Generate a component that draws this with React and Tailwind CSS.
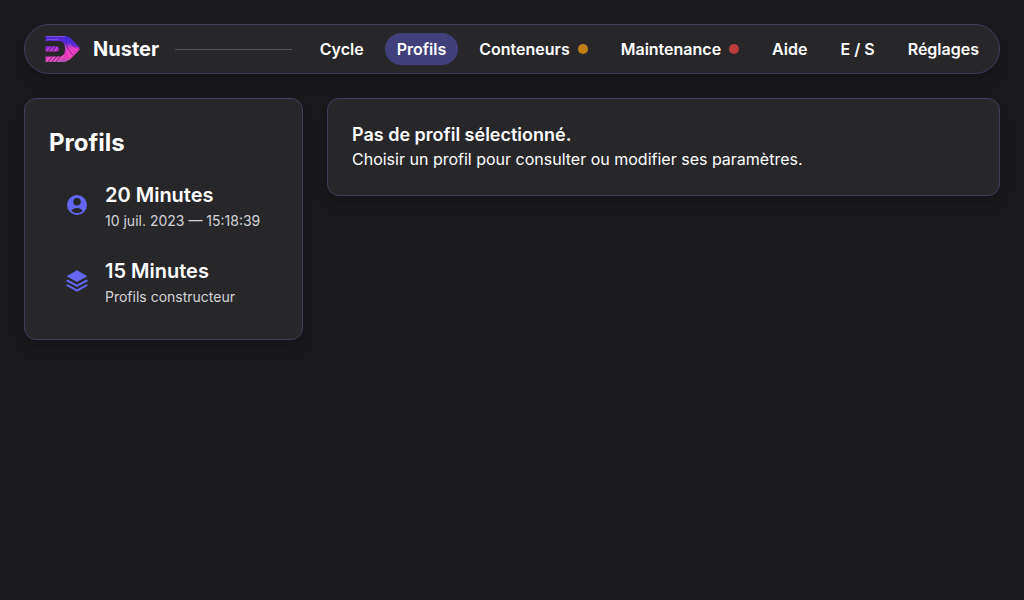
import React from "react";

const navItems = [
  { label: "Cycle" },
  { label: "Profils", active: true },
  { label: "Conteneurs", dot: "bg-[#bf8013]" },
  { label: "Maintenance", dot: "bg-[#bb3d3f]" },
  { label: "Aide" },
  { label: "E / S" },
  { label: "Réglages" },
];

function Logo() {
  return (
    <svg viewBox="0 0 36 28" className="h-7 w-9 shrink-0" aria-hidden="true">
      <defs>
        <linearGradient id="logo-fill" x1="0.3" y1="0" x2="0.5" y2="1">
          <stop offset="0" stopColor="#4326cf" />
          <stop offset="0.3" stopColor="#6a2ad2" />
          <stop offset="0.55" stopColor="#c22cc4" />
          <stop offset="0.8" stopColor="#e540b4" />
          <stop offset="1" stopColor="#a058b8" />
        </linearGradient>
        <clipPath id="logo-shape">
          <path d="M0.500 1H21L25 2.500L34.500 12.500V15L25 24.500L20 27H0.500V21.500H14C18.500 21.500 20 18.500 20 14C20 9.500 18.500 6 14 6H0.500ZM0.500 11.300H12C14.500 11.300 14.500 16.500 12 16.500H0.500Z" />
        </clipPath>
      </defs>
      <g clipPath="url(#logo-shape)">
        <rect width="36" height="28" fill="url(#logo-fill)" />
        <path d="M19 1L25 2L35 13L29 12L18 6Z" fill="#3d2cd6" opacity="0.65" />
        <path d="M23 12L34 13L25 24L20 22Z" fill="#fb38bd" opacity="0.6" />
        <g fill="none" stroke="#efb4ee" strokeWidth="0.6" opacity="0.55">
          <path d="M0 1.500H20M1 5.500C5 3 8 6 13 4" />
          <path d="M1 17L5 11M5 17L9 11M9 17L13 11" />
          <path d="M1 27L6 21M5 27L10 21M9 27L14 21M13 27L19 20" />
          <path d="M20 10C21 14 23 18 26 22M22 9C24 13 26 16 29 19M24 8C26 12 29 14 33 16" />
        </g>
        <g fill="none" stroke="#3b1457" strokeWidth="0.9" opacity="0.55">
          <path d="M3 17L7 11M7 17L11 11" />
          <path d="M3 27L8 21M7 27L12 21M11 27L16 21" />
          <path d="M21 8C23 13 25 17 28 20" />
        </g>
      </g>
    </svg>
  );
}

function UserIcon() {
  return (
    <svg viewBox="0 0 24 24" className="size-6 shrink-0 text-[#6366f1]" fill="currentColor" aria-hidden="true">
      <path
        fillRule="evenodd"
        d="M12 2a10 10 0 1 0 0 20a10 10 0 0 0 0-20ZM12 4.900a3.800 3.800 0 1 1 0 7.600a3.800 3.800 0 0 1 0-7.600ZM6.300 17.700C7.500 15.900 9.600 15 12 15s4.500.9 5.700 2.700C16.200 19.200 14.200 20 12 20s-4.200-.8-5.700-2.300Z"
      />
    </svg>
  );
}

function LayersIcon() {
  return (
    <svg viewBox="0 0 24 24" className="size-6 shrink-0 text-[#6366f1]" fill="currentColor" aria-hidden="true">
      <path d="M12 1.300L1.600 7.200L12 13L22.400 7.200Z" />
      <path d="M2.500 10.600L1.200 11.500L1.700 12.500L12 18L22.300 12.500L22.800 11.500L21.500 10.600L12 15.600Z" />
      <path d="M2.500 15.200L1.200 16.100L1.700 17.100L12 22.700L22.300 17.100L22.800 16.100L21.500 15.200L12 20.300Z" />
    </svg>
  );
}

const profiles = [
  { name: "20 Minutes", detail: "10 juil. 2023 — 15:18:39", Icon: UserIcon },
  { name: "15 Minutes", detail: "Profils constructeur", Icon: LayersIcon },
];

export default function App() {
  return (
    <div className="flex min-h-screen flex-col gap-6 bg-[#19191b] p-6 font-[Inter,sans-serif] text-white">
      <header className="flex items-center gap-4 rounded-full border border-[#3f3e60] bg-zinc-800 p-2 pl-5 shadow-lg">
        <a href="#accueil" className="flex items-center gap-3">
          <Logo />
          <span className="text-xl leading-7 font-bold">Nuster</span>
        </a>
        <div className="h-px grow bg-zinc-600" />
        <nav className="flex items-center gap-[9px]">
          {navItems.map(({ label, active, dot }) => (
            <a
              key={label}
              href={"#" + label.toLowerCase()}
              aria-current={active ? "page" : undefined}
              className={
                "flex items-center gap-2 rounded-full px-3 py-1 text-base font-semibold whitespace-nowrap " +
                (active ? "bg-[#41407a]" : "")
              }
            >
              {label}
              {dot && <span className={"size-2.5 rounded-full " + dot} />}
            </a>
          ))}
        </nav>
      </header>

      <main className="flex items-start gap-6">
        <section className="min-w-[279px] shrink-0 rounded-xl border border-[#3f3e60] bg-zinc-800 p-6 shadow-lg">
          <h1 className="mb-2 text-2xl leading-10 font-bold">Profils</h1>
          <div className="flex flex-col gap-2">
            {profiles.map(({ name, detail, Icon }) => (
              <button key={name} type="button" className="flex items-center gap-4 px-4 py-2 text-left">
                <Icon />
                <span className="flex flex-col">
                  <span className="text-xl leading-8 font-semibold">{name}</span>
                  <span className="text-sm leading-5 text-zinc-300">{detail}</span>
                </span>
              </button>
            ))}
          </div>
        </section>

        <section className="grow rounded-xl border border-[#3f3e60] bg-zinc-800 p-6 shadow-lg">
          <h2 className="text-lg leading-6 font-semibold">Pas de profil sélectionné.</h2>
          <p className="text-base leading-6">Choisir un profil pour consulter ou modifier ses paramètres.</p>
        </section>
      </main>
    </div>
  );
}
